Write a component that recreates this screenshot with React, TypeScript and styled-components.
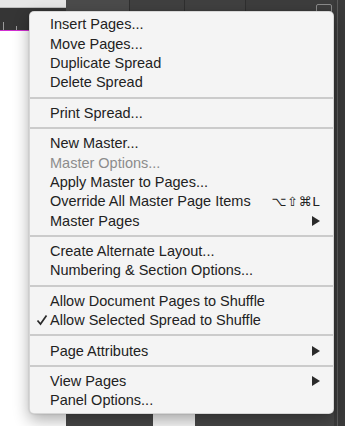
import React from 'react';
import styled, { createGlobalStyle } from 'styled-components';

const GlobalStyle = createGlobalStyle`
  html, body {
    margin: 0;
    padding: 0;
    background: #ffffff;
  }
  body {
    font-family: "Liberation Sans", Arial, sans-serif;
  }
`;

const Screen = styled.div`
  position: relative;
  width: 345px;
  height: 426px;
  overflow: hidden;
  display: flex;
`;

/* ---------- background: document window on the left ---------- */

const DocColumn = styled.div`
  width: 66px;
  display: flex;
  flex-direction: column;
  background: #ffffff;
`;

const TitleStrip = styled.div`
  height: 7px;
  background: #e6e6e6;
  border-bottom: 1px solid #bdbdbd;
`;

const Ruler = styled.div`
  height: 22px;
  background: #353535;
  display: flex;
  align-items: flex-end;
  gap: 12px;
  padding-left: 3px;
`;

const Tick = styled.span<{ $tall?: boolean }>`
  width: 1px;
  height: ${p => (p.$tall ? 8 : 4)}px;
  background: #9a9a9a;
`;

const PageEdge = styled.div`
  height: 1px;
  background: #d22fd2;
`;

const PageArea = styled.div`
  flex: 1;
  background: #ffffff;
`;

/* ---------- background: pages panel ---------- */

const PanelColumn = styled.div`
  flex: 1;
  display: flex;
  flex-direction: column;
  background: #484848;
`;

const TabBar = styled.div`
  height: 22px;
  display: flex;
  background: #3d3d3d;
  border-bottom: 1px solid #2e2e2e;
`;

const Tab = styled.div<{ $w: number; $active?: boolean }>`
  width: ${p => p.$w}px;
  background: ${p => (p.$active ? '#4b4b4b' : '#404040')};
  border-right: 1px solid #2f2f2f;
`;

const TabTools = styled.div`
  flex: 1;
  display: flex;
  justify-content: flex-end;
  align-items: flex-start;
  gap: 8px;
  padding: 4px 2px 0 0;
`;

const PanelMenuButton = styled.div`
  width: 14px;
  height: 12px;
  border: 1px solid #8a8a8a;
  border-radius: 2px;
`;

const PanelBody = styled.div`
  flex: 1;
`;

const ThumbRow = styled.div`
  height: 13px;
  display: flex;
`;

const Thumb = styled.div<{ $w: number; $light?: boolean }>`
  width: ${p => p.$w}px;
  background: ${p => (p.$light ? '#f7f7f7' : '#474747')};
`;

const SideColumn = styled.div`
  width: 11px;
  background: #3a3a3a;
  display: flex;
`;

const SideLine = styled.div`
  width: 1px;
  margin-left: 3px;
  background: #5c5c5c;
`;

/* ---------- context menu ---------- */

const Menu = styled.div`
  position: absolute;
  left: 29px;
  top: 11px;
  width: 305px;
  box-sizing: border-box;
  padding: 3px 0 2px;
  background: #f4f4f4;
  border-radius: 5px;
  border: 1px solid rgba(0, 0, 0, 0.12);
  box-shadow: 0 6px 16px rgba(0, 0, 0, 0.32), 0 0 2px rgba(0, 0, 0, 0.2);
  font-family: "Liberation Sans", Arial, sans-serif;
  font-size: 14.5px;
  color: #222222;
`;

const Item = styled.div<{ $disabled?: boolean }>`
  position: relative;
  height: 19.4px;
  display: flex;
  align-items: center;
  padding: 0 13px 1px 20px;
  box-sizing: border-box;
  color: ${p => (p.$disabled ? '#8c8c8c' : '#222222')};
  white-space: nowrap;
`;

const Label = styled.span`
  flex: 1;
`;

const Shortcut = styled.span`
  font-family: "DejaVu Sans", "Liberation Sans", sans-serif;
  font-size: 13px;
  letter-spacing: 0.6px;
  color: #222222;
`;

const Check = styled.svg`
  position: absolute;
  left: 6px;
  top: 3px;
`;

const Separator = styled.div`
  height: 2px;
  margin: 4px 0 5px;
  background: #cbcbcb;
`;

const Arrow = () => (
  <svg width="8" height="10" viewBox="0 0 8 10">
    <path d="M0 0 L8 5 L0 10 Z" fill="#2a2a2a" />
  </svg>
);

type Entry =
  | { label: string; disabled?: boolean; shortcut?: string; submenu?: boolean; checked?: boolean }
  | 'sep';

const entries: Entry[] = [
  { label: 'Insert Pages...' },
  { label: 'Move Pages...' },
  { label: 'Duplicate Spread' },
  { label: 'Delete Spread' },
  'sep',
  { label: 'Print Spread...' },
  'sep',
  { label: 'New Master...' },
  { label: 'Master Options...', disabled: true },
  { label: 'Apply Master to Pages...' },
  { label: 'Override All Master Page Items', shortcut: '⌥⇧⌘L' },
  { label: 'Master Pages', submenu: true },
  'sep',
  { label: 'Create Alternate Layout...' },
  { label: 'Numbering & Section Options...' },
  'sep',
  { label: 'Allow Document Pages to Shuffle' },
  { label: 'Allow Selected Spread to Shuffle', checked: true },
  'sep',
  { label: 'Page Attributes', submenu: true },
  'sep',
  { label: 'View Pages', submenu: true },
  { label: 'Panel Options...' },
];

export default function App() {
  return (
    <>
      <GlobalStyle />
      <Screen>
        <DocColumn>
          <TitleStrip />
          <Ruler>
            <Tick $tall />
            <Tick />
            <Tick />
            <Tick $tall />
            <Tick />
          </Ruler>
          <PageEdge />
          <PageArea />
        </DocColumn>

        <PanelColumn>
          <TabBar>
            <Tab $w={63} $active />
            <Tab $w={54} />
            <Tab $w={60} />
            <TabTools>
              <PanelMenuButton />
            </TabTools>
          </TabBar>
          <PanelBody />
          <ThumbRow>
            <Thumb $w={87} />
            <Thumb $w={42} $light />
            <Thumb $w={139} />
          </ThumbRow>
        </PanelColumn>

        <SideColumn>
          <SideLine />
        </SideColumn>

        <Menu>
          {entries.map((e, i) =>
            e === 'sep' ? (
              <Separator key={i} />
            ) : (
              <Item key={i} $disabled={e.disabled}>
                {e.checked && (
                  <Check width="12" height="12" viewBox="0 0 12 12">
                    <path d="M1.5 6.5 L4.5 10 L10.5 1.5" fill="none" stroke="#2a2a2a" strokeWidth="1.7" />
                  </Check>
                )}
                <Label>{e.label}</Label>
                {e.shortcut && <Shortcut>{e.shortcut}</Shortcut>}
                {e.submenu && <Arrow />}
              </Item>
            )
          )}
        </Menu>
      </Screen>
    </>
  );
}
